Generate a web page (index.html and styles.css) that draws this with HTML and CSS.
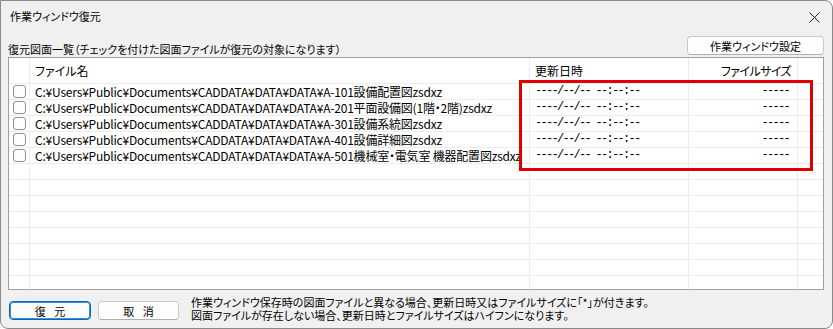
FILE: index.html
```html
<!DOCTYPE html>
<html lang="ja">
<head>
<meta charset="utf-8">
<title>作業ウィンドウ復元</title>
<link rel="stylesheet" href="styles.css">
</head>
<body>
<div class="window">
  <div class="titlebar">
    <span class="title">作業ウィンドウ復元</span>
    <svg class="close" width="11" height="11" viewBox="0 0 11 11"><path d="M0.5 0.5L10.5 10.5M10.5 0.5L0.5 10.5" stroke="#1a1a1a" stroke-width="1" fill="none"/></svg>
  </div>
  <div class="content">
    <div class="labelrow">
      <span class="label">復元図面一覧（チェックを付けた図面ファイルが復元の対象になります）</span>
      <button class="btn btn-settings">作業ウィンドウ設定</button>
    </div>
    <div class="listbox">
      <div class="grid">
        <div class="cell hdr chk"></div>
        <div class="cell hdr name">ファイル名</div>
        <div class="cell hdr date">更新日時</div>
        <div class="cell hdr size">ファイルサイズ</div>
        <div class="cell hdr rest"></div>

        <div class="cell chk"><span class="cb"></span></div>
        <div class="cell name path">C:¥Users¥Public¥Documents¥CADDATA¥DATA¥DATA¥A-101設備配置図zsdxz</div>
        <div class="cell date dash">----/--/-- --:--:--</div>
        <div class="cell size dash">-----</div>
        <div class="cell rest"></div>

        <div class="cell chk"><span class="cb"></span></div>
        <div class="cell name path">C:¥Users¥Public¥Documents¥CADDATA¥DATA¥DATA¥A-201平面設備図(1階・2階)zsdxz</div>
        <div class="cell date dash">----/--/-- --:--:--</div>
        <div class="cell size dash">-----</div>
        <div class="cell rest"></div>

        <div class="cell chk"><span class="cb"></span></div>
        <div class="cell name path">C:¥Users¥Public¥Documents¥CADDATA¥DATA¥DATA¥A-301設備系統図zsdxz</div>
        <div class="cell date dash">----/--/-- --:--:--</div>
        <div class="cell size dash">-----</div>
        <div class="cell rest"></div>

        <div class="cell chk"><span class="cb"></span></div>
        <div class="cell name path">C:¥Users¥Public¥Documents¥CADDATA¥DATA¥DATA¥A-401設備詳細図zsdxz</div>
        <div class="cell date dash">----/--/-- --:--:--</div>
        <div class="cell size dash">-----</div>
        <div class="cell rest"></div>

        <div class="cell chk"><span class="cb"></span></div>
        <div class="cell name path">C:¥Users¥Public¥Documents¥CADDATA¥DATA¥DATA¥A-501機械室・電気室 機器配置図zsdxz</div>
        <div class="cell date dash">----/--/-- --:--:--</div>
        <div class="cell size dash">-----</div>
        <div class="cell rest"></div>

        <div class="cell chk"></div><div class="cell name"></div><div class="cell date"></div><div class="cell size"></div><div class="cell rest"></div>
        <div class="cell chk"></div><div class="cell name"></div><div class="cell date"></div><div class="cell size"></div><div class="cell rest"></div>
        <div class="cell chk"></div><div class="cell name"></div><div class="cell date"></div><div class="cell size"></div><div class="cell rest"></div>
        <div class="cell chk"></div><div class="cell name"></div><div class="cell date"></div><div class="cell size"></div><div class="cell rest"></div>
        <div class="cell chk"></div><div class="cell name"></div><div class="cell date"></div><div class="cell size"></div><div class="cell rest"></div>
        <div class="cell chk"></div><div class="cell name"></div><div class="cell date"></div><div class="cell size"></div><div class="cell rest"></div>
        <div class="cell chk"></div><div class="cell name"></div><div class="cell date"></div><div class="cell size"></div><div class="cell rest"></div>
        <div class="cell chk"></div><div class="cell name"></div><div class="cell date"></div><div class="cell size"></div><div class="cell rest"></div>
      </div>
      <div class="highlight"></div>
    </div>
    <div class="bottom">
      <button class="btn btn-default">復 元</button>
      <button class="btn btn-cancel">取 消</button>
      <div class="note">
        <div>作業ウィンドウ保存時の図面ファイルと異なる場合、更新日時又はファイルサイズに「*」が付きます。</div>
        <div>図面ファイルが存在しない場合、更新日時とファイルサイズはハイフンになります。</div>
      </div>
    </div>
  </div>
</div>
</body>
</html>
```

FILE: styles.css
```css
* { box-sizing: border-box; }
html, body { margin: 0; padding: 0; background: #ffffff; }
body {
  font-family: "Noto Sans CJK JP", "Noto Sans", sans-serif;
  font-size: 11px;
  color: #000;
  font-feature-settings: "palt";
}
.window {
  width: 833px;
  height: 329px;
  background: #f0f0f0;
  border: 1px solid #8a8a8a;
  border-radius: 0 8px 8px 8px;
  display: flex;
  flex-direction: column;
  overflow: hidden;
}
.titlebar {
  height: 32px;
  display: flex;
  align-items: center;
  justify-content: space-between;
  padding: 0 12px 0 9px;
  flex: none;
}
.title { font-size: 11px; line-height: 14px; position: relative; top: -1px; }
.close { display: block; }
.content {
  padding: 0 8px 0 7px;
  display: flex;
  flex-direction: column;
  flex: 1;
}
.labelrow {
  display: flex;
  justify-content: space-between;
  align-items: center;
  height: 23px;
  margin-top: 1px;
}
.label { line-height: 14px; position: relative; top: 3px; }
.btn {
  font-family: inherit;
  font-size: 11px;
  font-feature-settings: "palt";
  color: #000;
  background: #fdfdfd;
  border: 1px solid #c9c9c9;
  border-bottom-color: #b0b0b0;
  border-radius: 4px;
  padding: 0;
  line-height: 16px;
}
.btn-settings { width: 137px; height: 19px; }
.listbox {
  position: relative;
  height: 233px;
  background: #fff;
  border: 1px solid #a0a0a0;
  overflow: hidden;
  flex: none;
}
.grid {
  display: grid;
  grid-template-columns: 21px 500px 159px 109px 1fr;
  grid-template-rows: 26px;
  grid-auto-rows: 16px;
}
.cell {
  border-bottom: 1px solid #ededed;
  border-right: 1px solid #ededed;
  white-space: nowrap;
  overflow: hidden;
  line-height: 15px;
  font-size: 12px;
}
.cell.rest { border-right: none; }
.hdr { line-height: 25px; }
.hdr.size { letter-spacing: -0.6px; }
.name { padding-left: 5px; }
.path { letter-spacing: -0.2px; text-overflow: ellipsis; padding-right: 2px; }
.date { padding-left: 5px; }
.size { text-align: right; padding-right: 6px; }
.dash {
  font-family: "Liberation Mono", "DejaVu Sans Mono", monospace;
  font-size: 12px;
  letter-spacing: -1.7px;
  line-height: 15px;
}
.size.dash { padding-right: 8px; }
.chk { display: flex; align-items: center; justify-content: center; }
.cb {
  width: 13px;
  height: 13px;
  border: 1px solid #8f8f8f;
  border-radius: 3px;
  background: #fdfdfd;
}
.highlight {
  position: absolute;
  left: 510px;
  top: 22px;
  width: 294px;
  height: 91px;
  border: 3px solid #e00000;
}
.bottom {
  display: flex;
  align-items: center;
  margin-top: 9px;
  padding-left: 1px;
}
.btn-default {
  width: 82px;
  height: 19px;
  border: 1px solid #0067c0;
  box-shadow: inset 0 0 0 1px #3d8fd6;
  word-spacing: 6px;
}
.btn-cancel { width: 81px; height: 19px; margin-left: 7px; word-spacing: 6px; }
.note {
  margin-left: 12px;
  margin-top: -3px;
  line-height: 13px;
  font-size: 11px;
}
```
